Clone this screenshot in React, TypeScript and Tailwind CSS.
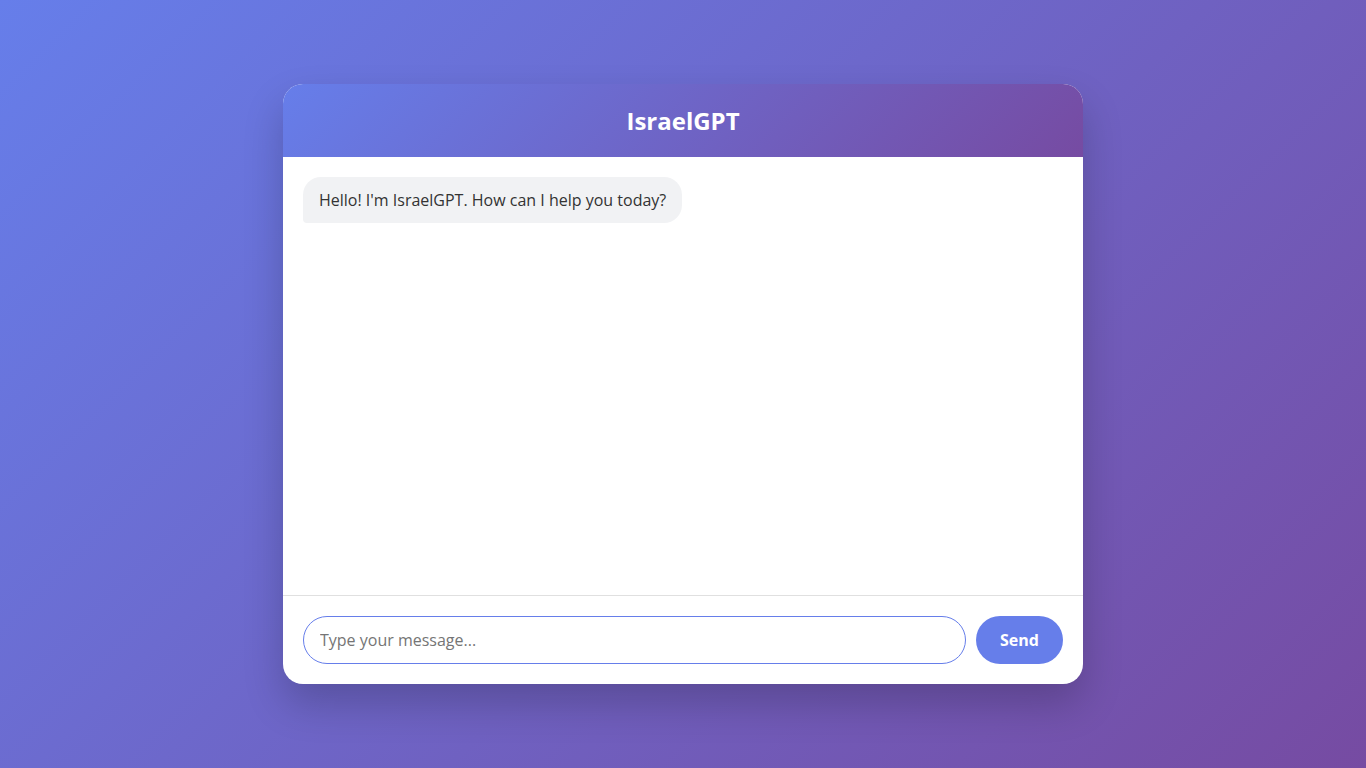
import React from "react";

export default function App() {
  return (
    <div
      className="min-h-screen w-full flex items-center justify-center bg-[linear-gradient(135deg,#667eea_0%,#764ba2_100%)]"
      style={{ fontFamily: '"Open Sans", "Noto Sans", sans-serif' }}
    >
      <div className="w-[800px] h-[600px] bg-white rounded-[20px] shadow-[0_20px_40px_rgba(0,0,0,0.2)] flex flex-col overflow-hidden">
        <div className="bg-[linear-gradient(135deg,#667eea_0%,#764ba2_100%)] text-white text-center p-5">
          <h1 className="text-[24px] font-bold leading-[33px]">IsraelGPT</h1>
        </div>
        <div className="flex-1 p-5 flex flex-col items-start overflow-y-auto">
          <div className="bg-[#f1f2f4] text-[#333] text-[16px] leading-[22px] px-4 py-3 rounded-[18px] rounded-bl-[4px]">
            Hello! I'm IsraelGPT. How can I help you today?
          </div>
        </div>
        <div className="border-t border-[#e0e0e0] p-5 flex gap-[10px]">
          <input
            className="flex-1 h-[48px] border border-[#667eea] rounded-full px-4 text-[16px] text-[#333] outline-none placeholder:text-[#757575]"
            placeholder="Type your message..."
          />
          <button className="w-[87px] h-[48px] bg-[#667eea] text-white font-bold text-[16px] rounded-full">
            Send
          </button>
        </div>
      </div>
    </div>
  );
}
